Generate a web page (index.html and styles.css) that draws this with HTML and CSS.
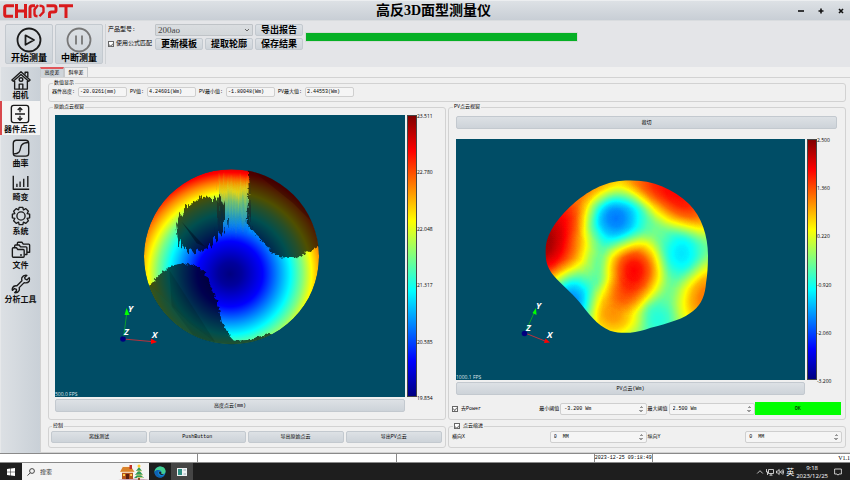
FILE: index.html
```html
<!DOCTYPE html>
<html lang="zh-CN">
<head>
<meta charset="utf-8">
<title>高反3D面型测量仪</title>
<link rel="stylesheet" href="styles.css">
</head>
<body>
<header class="titlebar">
  <svg class="logo" viewBox="0 0 70 14" role="img" aria-label="CHIOPT">
    <g fill="none" stroke="#d91a1c" stroke-width="3">
      <path d="M11 1.7H3.6Q1.7 1.7 1.7 3.6V10.4Q1.7 12.3 3.6 12.3H10"/>
      <path d="M13.5 0V14M22.5 0V14M13.5 7H22.5"/>
      <path d="M27 14V4Q27 1.700 29.500 1.700H32"/>
      <path d="M36.500 1.700Q40.500 1.700 40.500 4V8L36.500 12.300M35 1L31.500 5.500V10Q31.500 12.300 34.500 12.300" stroke-width="2.400"/>
      <path d="M43.500 1.700H51Q53 1.700 53 4V6Q53 8 51 8H48.500Q46.500 8 46.500 10V14"/>
      <path d="M56 1.700H70M63 1.700V14"/>
    </g>
  </svg>
  <h1>高反3D面型测量仪</h1>
  <div class="window-buttons">
    <button type="button" aria-label="最小化"><svg viewBox="0 0 6 6"><path d="M0 3H6"/></svg></button>
    <button type="button" aria-label="最大化"><svg viewBox="0 0 6 6"><path d="M.5 3H5.500M3 .5V5.500"/></svg></button>
    <button type="button" aria-label="关闭"><svg viewBox="0 0 6 6"><path d="M1 1L5 5M5 1L1 5"/></svg></button>
  </div>
</header>

<section class="toolbar">
  <button type="button" class="big">
    <svg viewBox="0 0 26 26" fill="none" stroke="#1c1c1c" stroke-width="1.800"><circle cx="13" cy="13" r="11.500"/><path d="M9.500 8.300L18 13L9.500 17.700Z" stroke-linejoin="round"/></svg>
    开始测量
  </button>
  <button type="button" class="big">
    <svg viewBox="0 0 26 26" fill="none" stroke="#777" stroke-width="1.800"><circle cx="13" cy="13" r="11.500"/><path d="M10 8.500V17.500M16 8.500V17.500"/></svg>
    中断测量
  </button>
  <div class="model">
    <label for="model">产品型号:</label>
    <select id="model"><option>200ao</option></select>
    <button type="button">导出报告</button>
    <label class="check"><input type="checkbox" checked>使用公式匹配</label>
    <button type="button">更新模板</button>
    <button type="button">提取轮廓</button>
    <button type="button">保存结果</button>
  </div>
  <div class="progress" role="progressbar" aria-label="进度"></div>
</section>

<div class="workspace">
  <nav class="sidebar">
    <a href="#camera"><svg viewBox="0 0 22 22"><path d="M1 11L11 2L21 11L19.500 12.500L11 5L2.500 12.500Z"/><path d="M4 12V21H18V12M15.500 5V2.500H18.500V8M9 21V15.500H13V21"/><circle cx="11" cy="10.500" r="2"/></svg>相机</a>
    <a href="#cloud" class="active"><svg viewBox="0 0 22 22"><rect x="1.500" y="1.500" width="19" height="19" rx="2.500"/><path d="M5.500 11H16.500M11 4V9M11 13V18M8.500 6.500L11 4L13.500 6.500M8.500 15.500L11 18L13.500 15.500"/></svg>器件点云</a>
    <a href="#curve"><svg viewBox="0 0 22 22"><rect x="2.500" y="2.500" width="17" height="17.500" rx="3.500"/><path d="M3 17.500C12 17.500 9 11 12 7.500C13.500 5.500 15.500 5 19 5"/></svg>曲率</a>
    <a href="#distortion"><svg viewBox="0 0 22 22"><path d="M2.500 4V19H20M6.500 13V16.500M10 10.500V16.500M14 7.500V16.500M18.500 4.500V16.500"/></svg>畸变</a>
    <a href="#system"><svg viewBox="0 0 22 22"><path d="M9 1.500H13L13.700 4.200L16.300 2.900L19.100 5.700L17.800 8.300L20.500 9V13L17.800 13.700L19.100 16.300L16.300 19.100L13.700 17.800L13 20.500H9L8.300 17.800L5.700 19.100L2.900 16.300L4.200 13.700L1.500 13V9L4.200 8.300L2.900 5.700L5.700 2.900L8.300 4.200Z"/><circle cx="11" cy="11" r="4.500"/></svg>系统</a>
    <a href="#files"><svg viewBox="0 0 22 22"><path d="M1.500 18V9.500Q1.500 8.500 2.500 8.500H6L7.500 10.500H13.500Q14.500 10.500 14.500 11.500V18Q14.500 19 13.500 19H2.500Q1.500 19 1.500 18Z"/><path d="M4 8V6.500Q4 5.500 5 5.500H9L10.500 7.500H16.500Q17.500 7.500 17.500 8.500V16H15M7 5V3.500Q7 2.500 8 2.500H12L13.500 4.500H19.500Q20.500 4.500 20.500 5.500V13.500H18M10 16.500H12"/></svg>文件</a>
    <a href="#tools"><svg viewBox="0 0 22 22"><path d="M20 4L17.500 6.500L15.500 5.500L15 4L17.500 1.500Q13.500 1 12 4Q11.500 5.500 12 7.500L6.500 13Q3 12.500 1.800 15Q1 16.500 1.500 18L3.800 16L6 17L6 18.500L4 20.500Q7.500 21 9 18Q9.600 16.500 9 15L14.500 9.500Q18 10.500 20 8Q21 6 20 4Z"/></svg>分析工具</a>
  </nav>

  <main>
    <div class="tabs" role="tablist">
      <button type="button" role="tab" aria-selected="true">高度差</button>
      <button type="button" role="tab" aria-selected="false">斜率差</button>
    </div>
    <div class="pane">
      <fieldset class="values">
        <legend>数值显示</legend>
        <label for="h">器件高度:</label><input id="h" value="-20.0261(mm)">
        <label for="pv">PV值:</label><input id="pv" value="4.24601(Wm)">
        <label for="pmin">PV最小值:</label><input id="pmin" value="-1.80048(Wm)">
        <label for="pmax">PV最大值:</label><input id="pmax" value="2.44553(Wm)">
      </fieldset>

      <div class="views">
        <fieldset class="view">
          <legend>原始点云视窗</legend>
          <div class="plot">
            <div class="scene">
              <svg viewBox="0 0 350 282">
                <defs>
                  <radialGradient id="bowl" gradientUnits="userSpaceOnUse" cx="300" cy="372" r="350">
                    <stop offset="0" stop-color="#000080"/>
                    <stop offset=".1" stop-color="#00009c"/>
                    <stop offset=".28" stop-color="#0000ff"/>
                    <stop offset=".4" stop-color="#0080ff"/>
                    <stop offset=".52" stop-color="#00ffff"/>
                    <stop offset=".62" stop-color="#80ff80"/>
                    <stop offset=".7" stop-color="#ffff00"/>
                    <stop offset=".79" stop-color="#ff8000"/>
                    <stop offset=".87" stop-color="#ff0000"/>
                    <stop offset="1" stop-color="#800000"/>
                  </radialGradient>
                  <linearGradient id="streak" x1="0" y1="0" x2="0" y2="1">
                    <stop offset="0" stop-color="#e08000" stop-opacity="0"/>
                    <stop offset=".25" stop-color="#d8c820" stop-opacity=".8"/>
                    <stop offset=".45" stop-color="#70b870" stop-opacity=".9"/>
                    <stop offset=".7" stop-color="#2890b8" stop-opacity=".9"/>
                    <stop offset="1" stop-color="#0040ff" stop-opacity="0"/>
                  </linearGradient>
                  <clipPath id="disc"><circle cx="304.500" cy="320" r="262.500"/></clipPath>
                  <filter id="ragged" filterUnits="userSpaceOnUse" x="0" y="0" width="620" height="620">
                    <feTurbulence type="fractalNoise" baseFrequency=".14 .012" numOctaves="2" seed="4" result="n"/>
                    <feDisplacementMap in="SourceGraphic" in2="n" scale="42" xChannelSelector="A" yChannelSelector="R"/>
                  </filter>
                  <filter id="rough" filterUnits="userSpaceOnUse" x="0" y="0" width="620" height="620">
                    <feTurbulence type="fractalNoise" baseFrequency=".1" numOctaves="2" seed="7" result="n"/>
                    <feDisplacementMap in="SourceGraphic" in2="n" scale="16" xChannelSelector="R" yChannelSelector="G"/>
                  </filter>
                </defs>
                <g transform="translate(75 35) scale(.33333)">
                  <g clip-path="url(#disc)">
                    <circle cx="304.500" cy="320" r="262.500" fill="url(#bowl)"/>
                    <path d="M265 75H362V235L345 260H262Z" fill="url(#streak)" filter="url(#ragged)"/>
                    <g fill="#000" fill-opacity=".69">
                      <path d="M138 225L150 195L175 168Q195 148 225 143L275 138L284 170L280 245L262 262L240 285L215 305L180 300L150 290L142 255Z" filter="url(#ragged)"/>
                      <path d="M353 50L356 110L350 220L375 252L400 275L425 308L450 322L495 325L530 308L570 288L600 280V50Z" filter="url(#rough)"/>
                      <path d="M20 430L65 400L95 368L130 345L160 340L200 348L225 370L245 415L262 455L275 515L300 560L312 572L350 570L425 550L440 600H20Z" filter="url(#rough)"/>
                    </g>
                    <path d="M353 50L490 160L570 240V50Z" fill="#300" opacity=".35"/>
                    <path d="M155 215L225 290L200 280Z" fill="#001" opacity=".4"/>
                    <path d="M118 360L255 575L200 570L125 470Z" fill="#000" opacity=".12"/>
                    <path d="M40 400L62 405L180 520L260 580L120 560Z" fill="#0b5a48" opacity=".25"/>
                  </g>
                </g>
                <path d="M68.500 223L71.500 200" stroke="#0c9c30"/><path d="M69.500 200L71.500 193L74.500 200Z" fill="#0f0"/>
                <path d="M68.500 224L96 226.500" stroke="#b8323c"/><path d="M96 223.500L102 227L96 229Z" fill="#f00"/>
                <circle cx="68" cy="224" r="2.800" fill="#000080"/>
                <g class="axis"><text x="73" y="197">Y</text><text x="69" y="220">Z</text><text x="97" y="223">X</text></g>
              </svg>
              <span class="fps">500.0 FPS</span>
            </div>
            <div class="scale">
              <div class="bar"></div>
              <div class="ticks"><span>23.511</span><span>22.780</span><span>22.048</span><span>21.317</span><span>20.585</span><span>19.854</span></div>
            </div>
            <button type="button">高度点云(mm)</button>
          </div>
        </fieldset>

        <fieldset class="view pv">
          <legend>PV点云视窗</legend>
          <button type="button" class="crop">裁切</button>
          <div class="plot">
            <div class="scene">
              <svg viewBox="0 0 349 241">
                <defs>
                  <radialGradient id="up">
                    <stop offset="0" stop-color="#fff"/><stop offset=".2" stop-color="#fff" stop-opacity=".94"/><stop offset=".4" stop-color="#fff" stop-opacity=".76"/><stop offset=".6" stop-color="#fff" stop-opacity=".46"/><stop offset=".8" stop-color="#fff" stop-opacity=".16"/><stop offset=".9" stop-color="#fff" stop-opacity=".05"/><stop offset="1" stop-color="#fff" stop-opacity="0"/>
                  </radialGradient>
                  <radialGradient id="down">
                    <stop offset="0" stop-color="#000"/><stop offset=".2" stop-color="#000" stop-opacity=".92"/><stop offset=".4" stop-color="#000" stop-opacity=".7"/><stop offset=".6" stop-color="#000" stop-opacity=".38"/><stop offset=".8" stop-color="#000" stop-opacity=".12"/><stop offset="1" stop-color="#000" stop-opacity="0"/>
                  </radialGradient>
                  <filter id="jet" filterUnits="userSpaceOnUse" x="0" y="0" width="600" height="540" color-interpolation-filters="sRGB">
                    <feComponentTransfer>
                      <feFuncR type="table" tableValues="0 0 0 0 .5 1 1 1 .5"/>
                      <feFuncG type="table" tableValues="0 0 .5 1 1 1 .5 0 0"/>
                      <feFuncB type="table" tableValues=".5 1 1 1 .5 0 0 0 0"/>
                    </feComponentTransfer>
                  </filter>
                  <clipPath id="blob"><path d="M300 46C370 46 430 72 478 118C515 155 534 215 534 270C534 320 530 340 527 365C522 400 510 425 480 445C450 468 390 480 345 494C310 505 275 507 240 497C200 480 175 445 150 413C120 378 95 360 72 333C52 310 44 285 47 245C52 200 90 150 135 112C180 75 230 46 300 46Z"/></clipPath>
                </defs>
                <g transform="translate(74 26) scale(.33333)" clip-path="url(#blob)">
                  <g filter="url(#jet)">
                    <rect width="600" height="540" fill="#7c7c7c"/>
                    <g fill="url(#up)">
                      <ellipse cx="35" cy="235" rx="150" ry="190" opacity=".96" transform="rotate(12 35 235)"/>
                      <ellipse cx="120" cy="110" rx="180" ry="110" opacity=".5" transform="rotate(-40 120 110)"/>
                      <ellipse cx="280" cy="45" rx="240" ry="95" opacity=".38"/>
                      <ellipse cx="445" cy="95" rx="210" ry="115" opacity=".74" transform="rotate(33 445 95)"/>
                      <ellipse cx="312" cy="318" rx="115" ry="135" opacity=".76"/>
                      <ellipse cx="250" cy="445" rx="115" ry="115" opacity=".48"/>
                      <ellipse cx="285" cy="385" rx="90" ry="70" opacity=".2"/>
                      <ellipse cx="530" cy="395" rx="110" ry="150" opacity=".54" transform="rotate(25 530 395)"/>
                      <ellipse cx="130" cy="230" rx="100" ry="170" opacity=".3"/>
                    </g>
                    <g fill="url(#down)">
                      <ellipse cx="258" cy="160" rx="120" ry="120" opacity=".5"/>
                      <ellipse cx="455" cy="265" rx="90" ry="110" opacity=".28"/>
                      <ellipse cx="125" cy="410" rx="95" ry="130" opacity=".46"/>
                      <ellipse cx="385" cy="465" rx="70" ry="90" opacity=".16"/>
                      <ellipse cx="200" cy="290" rx="50" ry="100" opacity=".06"/>
                    </g>
                  </g>
                </g>
                <path d="M69 194L78 174" stroke="#0c9c30"/><path d="M76.500 174L80 169L80.500 176Z" fill="#0f0"/>
                <path d="M69 194L89 202" stroke="#b8323c"/><path d="M89.500 199.500L94 203.500L88 204Z" fill="#f00"/>
                <circle cx="68.500" cy="194.500" r="2.800" fill="#000080"/>
                <g class="axis"><text x="80" y="170">Y</text><text x="70" y="192">Z</text><text x="91" y="199">X</text></g>
              </svg>
              <span class="fps">1000.1 FPS</span>
            </div>
            <div class="scale">
              <div class="bar"></div>
              <div class="ticks"><span>2.500</span><span>1.360</span><span>0.220</span><span>-0.920</span><span>-2.060</span><span>-3.200</span></div>
            </div>
            <button type="button">PV点云(Wm)</button>
          </div>
          <div class="threshold">
            <label class="check"><input type="checkbox" checked>去Power</label>
            <label for="tmin">最小阈值</label><span class="spin"><input id="tmin" value="-3.200 Wm"><i></i></span>
            <label for="tmax">最大阈值</label><span class="spin"><input id="tmax" value="2.500 Wm"><i></i></span>
            <button type="button" class="ok">OK</button>
          </div>
        </fieldset>

        <fieldset class="controls">
          <legend>控制</legend>
          <button type="button">离线测试</button>
          <button type="button">PushButton</button>
          <button type="button">导出原始点云</button>
          <button type="button">导出PV点云</button>
        </fieldset>

        <fieldset class="controls indent">
          <legend><label class="check"><input type="checkbox" checked>点云缩进</label></legend>
          <label for="ix">横向X</label><span class="spin"><input id="ix" value="0  MM"><i></i></span>
          <label for="iy">纵向Y</label><span class="spin"><input id="iy" value="0  MM"><i></i></span>
        </fieldset>
      </div>
    </div>
  </main>
</div>

<footer class="status">
  <span></span><span></span><span></span><time>2023-12-25 09:18:49</time><span>V1.1</span>
</footer>

<div class="taskbar">
  <button type="button" class="start" aria-label="开始"><svg viewBox="0 0 8 8" fill="#fff"><path d="M0 1L3.500 .5V3.700H0ZM4 .4L8 0V3.700H4ZM0 4.200H3.500V7.500L0 7ZM4 4.200H8V8L4 7.600Z"/></svg></button>
  <div class="search">
    <svg class="lens" viewBox="0 0 8 8" fill="none" stroke="#333" stroke-width=".9"><circle cx="5" cy="3" r="2.400"/><path d="M3.300 4.800L.5 7.600"/></svg>
    <input type="text" placeholder="搜索" aria-label="搜索">
    <svg class="festive" viewBox="0 0 34 18">
      <ellipse cx="19" cy="18" rx="17" ry="2.600" fill="#c9a5b4"/>
      <path d="M7 8H18V16H7Z" fill="#b5531c"/><path d="M5 9L8 3.500H16L19.500 9Z" fill="#d9822b"/><path d="M5 9.300H19.500M8 3.500H16" stroke="#fff0dd" stroke-width="1"/><path d="M14.500 2H17V6H14.500Z" fill="#c22f27"/><path d="M11 11H14V16H11Z" fill="#5a1f12"/><path d="M8 11H10V13H8ZM15.200 11H17V13H15.200Z" fill="#ffd24a"/>
      <path d="M24 4L27 8H21ZM24 7L28 12H20ZM24 10L29 15H19Z" fill="#2f9a58"/><path d="M22 8H27M21 12H28M22 14.500H28" stroke="#f5d68a" stroke-width=".8"/><circle cx="24" cy="3" r="1.500" fill="#ffc928"/><path d="M23 15H25V17H23Z" fill="#8b4a24"/>
    </svg>
  </div>
  <button type="button" class="app" aria-label="Edge"><svg viewBox="0 0 12 12"><circle cx="6" cy="6" r="5.500" fill="#1487cf"/><path d="M.5 6C1 2 4 .5 6.500 .5C10 .6 12 3.500 11.500 6C11 8 8.500 8.300 7.300 7.500C8.300 6 7 4 4.800 4C3 4 1.200 5 .5 6Z" fill="#43cf91"/><path d="M.5 6C1.500 3.700 4.500 3.400 6 4.500C4 5 3.500 7 4.700 8.800C6 10.500 8.500 10.500 10.500 9C9 11.500 6.500 12 4.500 11.300C2 10.400 .3 8.500 .5 6Z" fill="#0f62b4"/><path d="M5 6Q6 4.800 7.300 6L7 7.500Q8 8.400 9.800 8Q8 9.500 6.300 8.600Q4.800 7.600 5 6Z" fill="#1e1e1e"/></svg></button>
  <button type="button" class="app open" aria-label="测量程序"><svg viewBox="0 0 12 12"><path d="M1 2H11V10H1Z" fill="#eef2f3"/><path d="M2 3H6V9H2Z" fill="#2f8f83"/><path d="M7.500 4H10M7.500 8H10" stroke="#9ab"/></svg></button>
  <div class="tray">
    <svg viewBox="0 0 8 8"><path d="M1.200 5.500L4 2.700L6.800 5.500"/></svg>
    <svg viewBox="0 0 8 8"><path d="M2.500 1.500H7.500V5.500H2.500ZM5 5.500V7M3.500 7.200H6.500M.5 1V4H2.500M1.500 4V7"/></svg>
    <svg viewBox="0 0 8 8"><path d="M.5 3H1.500L3.200 1.500V6.500L1.500 5H.5ZM4.500 3Q5.200 4 4.500 5M5.700 2.200Q6.900 4 5.700 5.800M6.800 1.300Q8.400 4 6.800 6.700"/></svg>
    <span class="ime">英</span>
    <time>9:18<br>2023/12/25</time>
    <svg viewBox="0 0 8 8"><path d="M.6 1H7.400V6H5L4 7.200L3 6H.6Z"/></svg>
  </div>
</div>
</body>
</html>
```
FILE: styles.css
```css
:root {
  --face: linear-gradient(#dde1e5, #cdd3d9);
  --line: #d2d2d2;
  --song: "Liberation Serif", "Noto Sans CJK SC", serif;
  --small: "Liberation Mono", "Noto Sans CJK SC", monospace;
}

* { box-sizing: border-box; }

body {
  margin: 0;
  min-height: 100vh;
  display: flex;
  flex-direction: column;
  background: #f0f0f0;
  color: #000;
  font: 5px/8px var(--small);
}

button, input, select { font: inherit; color: inherit; margin: 0; padding: 0; }
button, a { white-space: nowrap; }
label { white-space: nowrap; }
svg { display: block; }

button {
  background: var(--face);
  border: 1px solid #c3c9cf;
  border-radius: 2px;
}

input {
  min-width: 0;
  border: 1px solid #cfcfcf;
  border-radius: 2px;
  background: #f5f5f5;
}

.check { display: flex; align-items: center; gap: 3px; }
.check input {
  appearance: none;
  flex: none;
  display: grid;
  place-items: center;
  width: 6px;
  height: 6px;
  border: 1px solid #666;
  border-radius: 0;
  background: #fff;
}
.check input:checked::before {
  content: "";
  width: 3px;
  height: 2px;
  border: solid #777;
  border-width: 0 0 1px 1px;
  transform: rotate(-45deg);
}

/* Title bar */
.titlebar {
  display: grid;
  grid-template-columns: 1fr auto 1fr;
  align-items: center;
  height: 21px;
  padding: 0 6px 0 3px;
  border-top: 1px solid #eceef0;
  border-bottom: 1px solid #d9dcdf;
  background: linear-gradient(#dde1e5, #c8ced5);
}
.logo { width: 70px; height: 14px; }
h1 { margin: 0 0 0 20px; font: bold 14px/18px var(--song); }
.window-buttons { display: flex; justify-content: flex-end; gap: 14px; }
.window-buttons button { width: 6px; height: 6px; background: none; border: 0; }
.window-buttons svg { width: 6px; height: 6px; stroke: #111; stroke-width: 1.600; }

/* Toolbar */
.toolbar {
  display: flex;
  gap: 2px;
  height: 46px;
  padding: 3px 4px 3px 5px;
  background: #e4e5e8;
}
.toolbar button { font: bold 9px/10px var(--song); }
.big {
  display: flex;
  flex-direction: column;
  align-items: center;
  justify-content: space-between;
  width: 48px;
  padding: 2px 0 0;
}
.big svg { width: 26px; height: 26px; }
.model {
  display: grid;
  grid-template-columns: 45px repeat(3, 48px);
  grid-auto-rows: 12px;
  gap: 2px;
  align-items: center;
  padding-left: 2px;
  border-left: 1px solid #cfd2d5;
  font-size: 6px;
}
.model .check { gap: 2px; }
.model button { height: 12px; }
.model select {
  grid-column: span 2;
  appearance: none;
  height: 12px;
  padding-left: 2px;
  border: 1px solid #bfc3c7;
  border-radius: 1px;
  color: #444;
  font: 9px/10px var(--song);
  background:
    linear-gradient(45deg, transparent 45%, #666 46%, #666 60%, transparent 61%) right 5px center / 2px 2px no-repeat,
    linear-gradient(-45deg, transparent 45%, #666 46%, #666 60%, transparent 61%) right 3px center / 2px 2px no-repeat,
    linear-gradient(#dadde0, #d3d7da);
}
.progress {
  flex: 0 1 273px;
  height: 10px;
  margin-top: 8px;
  border: 1px solid #d4dcd6;
  background: #06b025;
}

/* Sidebar */
.workspace { flex: 1; display: flex; }
.sidebar {
  flex: none;
  width: 40px;
  border-left: 1px solid #e6e8ea;
  background: linear-gradient(90deg, #dce0e4, #c9d0d7);
}
.sidebar a {
  display: flex;
  flex-direction: column;
  align-items: center;
  gap: 1px;
  height: 34px;
  padding-top: 3px;
  color: #111;
  font: bold 8px/10px var(--song);
  text-decoration: none;
}
.sidebar .active { background: #f4f4f4; box-shadow: inset 2px 0 #d9484c; margin-left: -1px; }
.sidebar svg { width: 20px; height: 20px; fill: none; stroke: #1a1a1a; stroke-width: 1.500; stroke-linejoin: round; }

/* Main pane */
main { flex: 1; min-width: 0; display: flex; flex-direction: column; }
.tabs { display: flex; height: 10px; }
.tabs button {
  width: 24px;
  border: 1px solid #c6c9cc;
  border-bottom: 0;
  border-radius: 0;
  background: #eee;
}
.tabs [aria-selected="true"] { background: #cfd5da; border-top: 2px solid #e0555a; }
.pane {
  flex: 1;
  display: flex;
  flex-direction: column;
  gap: 1px;
  padding: 1px 4px 4px 7px;
  border: 1px solid var(--line);
  border-right: 0;
}

fieldset {
  min-width: 0;
  margin: 0;
  padding: 0 3px 4px;
  border: 1px solid var(--line);
  border-radius: 3px;
}
legend { margin-left: 1px; padding: 0 1px; line-height: 8px; }

.values { display: flex; align-items: center; gap: 3px; }
.values input { width: 49px; height: 10px; padding-left: 1px; }

.views {
  flex: 1;
  display: grid;
  grid-template-columns: 1fr 1fr;
  grid-template-rows: 1fr auto;
  gap: 2px;
}
.view { display: flex; flex-direction: column; padding: 4px 0 7px 3px; }
.view .plot { padding-left: 3px; }
.pv { padding: 5px 4px 4px 3px; }
.pv .plot { padding-left: 4px; margin-right: -4px; }
.crop { height: 13px; margin: 0 4px 10px; }

.plot {
  flex: 1;
  display: grid;
  grid-template-columns: 1fr 40px;
  grid-template-rows: minmax(0, 1fr) 13px;
  gap: 2px 0;
}
.scene { position: relative; display: grid; grid-template-rows: minmax(0, 1fr); background: #004d66; }
.scene svg { width: 100%; height: 100%; min-height: 0; }
.axis { fill: #fff; font: italic bold 9px "Open Sans", sans-serif; }
.fps { position: absolute; left: 0; bottom: 0; color: #dde6ea; font: 5px/6px "Open Sans", sans-serif; }
.scale { display: flex; padding-left: 2px; }
.bar {
  width: 10px;
  border: 1px solid #444;
  background: linear-gradient(#800000, #f00 12.500%, #ff8000 25%, #ff0 37.500%, #80ff80 50%, #0ff 62.500%, #0080ff 75%, #00f 87.500%, #000080);
}
.ticks {
  display: flex;
  flex-direction: column;
  justify-content: space-between;
  margin: -2px 0 -4px;
  font: 5px/6px "Open Sans", sans-serif;
}

.threshold {
  display: grid;
  grid-template-columns: 1fr 22px 1fr 22px 1fr 1fr;
  align-items: center;
  height: 13px;
  margin-top: 7px;
}
.threshold > label:not(.check) { text-align: center; }
.ok { height: 13px; border: 0; border-radius: 0; background: #0f0; }
.spin {
  display: flex;
  align-items: center;
  min-width: 0;
  height: 12px;
  padding: 0 3px;
  border: 1px solid #cfcfcf;
  border-radius: 2px;
  background: #f5f5f5;
}
.spin input { flex: 1; width: 0; border: 0; background: none; white-space: pre; }
.spin i {
  width: 4px;
  height: 6px;
  background:
    conic-gradient(from 135deg at 50% 0, #999 90deg, transparent 0) top / 4px 2px no-repeat,
    conic-gradient(from -45deg at 50% 100%, #999 90deg, transparent 0) bottom / 4px 2px no-repeat;
}

.controls { display: flex; gap: 2px; padding: 1px 3px 4px 2px; }
.controls button { flex: 1 1 0; height: 12px; }
.indent {
  display: grid;
  grid-template-columns: repeat(4, 1fr);
  gap: 1px;
  align-items: center;
  padding: 1px 3px 4px;
}

/* Status bar */
.status { display: flex; height: 10px; border: 1px solid #8a8a8a; border-width: 1px 0; background: #fff; }
.status > * { flex: 1 1 0; border-right: 1px solid #8a8a8a; }
.status time { flex: none; font: 5px/8px var(--small); white-space: nowrap; }
.status > :last-child { border: 0; text-align: right; font: 6px/8px var(--song); }

/* Taskbar */
.taskbar {
  display: flex;
  align-items: stretch;
  height: 18px;
  background: #1e1e1e;
  color: #fff;
  font: 6px/8px "Open Sans", "Noto Sans CJK SC", sans-serif;
}
.taskbar button { display: grid; place-items: center; width: 22px; background: none; border: 0; border-radius: 0; }
.start svg { width: 8px; height: 8px; }
.search { display: flex; align-items: center; gap: 5px; width: 127px; padding-left: 5px; background: #f3f3f3; }
.lens { width: 8px; height: 8px; }
.search input { flex: 1; border: 0; background: none; font-size: 6px; }
.search input::placeholder { color: #333; }
.festive { width: 34px; height: 18px; }
.app svg { width: 12px; height: 12px; }
.taskbar .open { background: #454545; }
.tray { display: flex; align-items: center; gap: 2px; margin-left: auto; padding-right: 8px; }
.tray svg { width: 8px; height: 8px; fill: none; stroke: #eee; stroke-width: .8; }
.tray .ime { font-size: 8px; }
.tray time { margin-right: 4px; text-align: center; }
```
